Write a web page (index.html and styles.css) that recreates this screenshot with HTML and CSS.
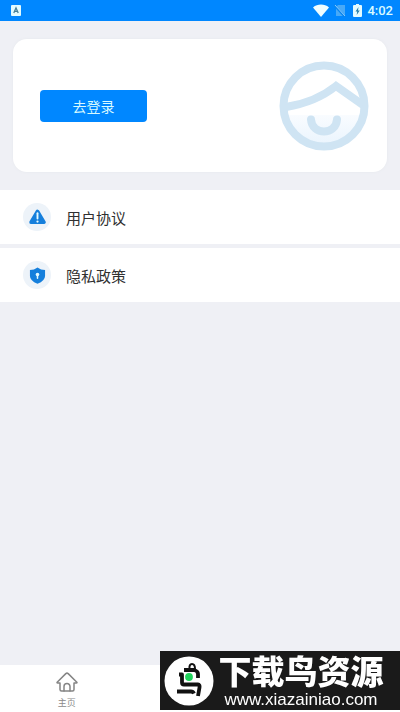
FILE: index.html
```html
<!DOCTYPE html>
<html lang="zh-CN">
<head>
<meta charset="utf-8">
<meta name="viewport" content="width=device-width, initial-scale=1">
<title>我的</title>
<link rel="stylesheet" href="styles.css">
</head>
<body>
<header class="status">
  <svg class="status-app" viewBox="0 0 10 11" aria-hidden="true"><rect width="10" height="11" rx="1" fill="#e2fbff"/><path d="M2.8 8 5 2.8 7.2 8M3.6 6.4h2.8" fill="none" stroke="#467f98" stroke-width="1.3"/></svg>
  <div class="status-right">
    <svg class="wifi" viewBox="0 0 16 13" aria-hidden="true"><path d="M0 3.4C4.600 -.4 11.400 -.4 16 3.400L8 13z" fill="#effdff"/></svg>
    <svg class="sim" viewBox="0 0 12 13" aria-hidden="true"><path d="M4 1h7v11H2V3z" fill="#48a9f7"/><path d="M0 1l11 12" stroke="#0785ef" stroke-width="2"/><path d="M1 1l10 11" stroke="#8acaff" stroke-width="1"/></svg>
    <svg class="battery" viewBox="0 0 9 13" aria-hidden="true"><path d="M3 0h3v1h2q1 0 1 1v10q0 1-1 1H1q-1 0-1-1V2q0-1 1-1h2z" fill="#e5fcff"/><path d="M5.500 3 2.500 7.500h1.700L3.700 11l3-4.500H5z" fill="#287faa"/></svg>
    <time>4:02</time>
  </div>
</header>
<main>
  <section class="profile">
    <button class="login" type="button">去登录</button>
    <svg class="avatar" viewBox="0 0 90 90" aria-hidden="true">
      <defs><linearGradient id="face" x1="0" y1="0" x2="0" y2="1"><stop offset="0" stop-color="#f9fcff"/><stop offset="1" stop-color="#eaf4fd"/></linearGradient></defs>
      <path d="M6 54h78a40 40 0 0 1-78 0z" fill="url(#face)"/>
      <g fill="none" stroke="#cfe4f3" stroke-width="8">
        <circle cx="45" cy="45" r="40.500"/>
        <path d="M7 46C26 43 42 37 57 25L84 44"/>
        <path d="M32 58.500c1 16 25 16 26 0" stroke-linecap="round"/>
      </g>
    </svg>
  </section>
  <nav class="menu" aria-label="协议">
    <a class="row" href="#agreement">
      <span class="row-icon"><svg viewBox="0 0 18 18" aria-hidden="true"><path d="M9 2.700 15.700 14H2.300z" fill="#157fdc" stroke="#157fdc" stroke-width="4" stroke-linejoin="round"/><path d="M9 4.500v5.600" stroke="#e5faff" stroke-width="2" stroke-linecap="round"/><circle cx="9" cy="13.300" r="1.200" fill="#e5faff"/></svg></span>
      <span>用户协议</span>
    </a>
    <a class="row" href="#privacy">
      <span class="row-icon"><svg viewBox="0 0 18 18" aria-hidden="true"><path d="M9 .500Q12.500 3.200 17 3.200V9.500Q17 14.500 9 17.700 1 14.500 1 9.500V3.200Q5.500 3.200 9 .500z" fill="#157fdc"/><circle cx="9" cy="8" r="1.900" fill="#e5faff"/><path d="M9 8v4" stroke="#e5faff" stroke-width="1.600" stroke-linecap="round"/></svg></span>
      <span>隐私政策</span>
    </a>
  </nav>
</main>
<footer class="tabs">
  <a class="tab" href="#home">
    <svg viewBox="0 0 22 20" aria-hidden="true"><g fill="none" stroke="#858585" stroke-width="1.500" stroke-linejoin="round" stroke-linecap="round"><path d="M4 11H1.700Q.5 11 1.400 10L9.800 1.600Q11 .6 12.200 1.600L20.600 10Q21.500 11 20.300 11H18V17.500Q18 19 16.500 19H5.500Q4 19 4 17.500z"/><path d="M8 19v-4.500a3 3 0 0 1 6 0V19"/></g></svg>
    <span>主页</span>
  </a>
</footer>
<aside class="brand">
  <svg class="brand-logo" viewBox="0 0 50 50" aria-hidden="true">
    <circle cx="25" cy="25" r="24.500" fill="#fff"/>
    <g fill="none" stroke="#111" stroke-width="3.800" stroke-linejoin="round">
      <path d="M25.500 13q-.5-5 2.500-5t3 5" stroke-width="2"/>
      <path d="M20 14h10q4 1 4 4v4"/>
      <path d="M15 18.500h3v8q0 2 2 2h14q2 0 1.500 3T34 40"/>
      <path d="M13 35.500h14q2 0 3 2"/>
    </g>
    <circle cx="25" cy="21" r="3.900" fill="#20d45c"/>
  </svg>
  <div class="brand-text">
    <strong>下载鸟资源</strong>
    <span>www.xiazainiao.com</span>
  </div>
</aside>
</body>
</html>
```
FILE: styles.css
```css
* { box-sizing: border-box; }
body {
  margin: 0;
  min-height: 100vh;
  display: flex;
  flex-direction: column;
  background: #eff0f5;
  color: #303030;
  font-family: Roboto, "Noto Sans CJK SC", sans-serif;
}
a { color: inherit; text-decoration: none; }
svg { display: block; flex: none; }
.status {
  height: 21px;
  padding: 0 7px 0 11px;
  display: flex;
  align-items: center;
  justify-content: space-between;
  background: #0087ff;
  color: #d9faff;
}
.status-app { width: 10px; height: 11px; }
.status-right { display: flex; align-items: center; }
.wifi { width: 16px; height: 13px; margin-right: 5px; }
.sim { width: 12px; height: 13px; margin-right: 7px; }
.battery { width: 9px; height: 13px; margin-right: 5px; }
.status time { font-size: 13px; line-height: 21px; font-weight: 500; }
main { flex: 1; }
.profile {
  margin: 18px 13px;
  padding: 22px 18px 21px 27px;
  display: flex;
  align-items: center;
  justify-content: space-between;
  background: #fff;
  border-radius: 14px;
  box-shadow: 0 0 3px #e6e8ed;
}
.login {
  width: 107px;
  height: 32px;
  padding: 0;
  border: 0;
  border-radius: 4px;
  background: #0087ff;
  color: #d9faff;
  font: inherit;
  font-size: 14px;
}
.avatar { width: 90px; height: 90px; }
.menu { display: grid; gap: 4px; }
.row {
  height: 54px;
  padding: 0 23px;
  display: flex;
  align-items: center;
  gap: 15px;
  background: #fff;
  font-size: 15px;
}
.row-icon {
  width: 28px;
  height: 28px;
  display: grid;
  place-items: center;
  border-radius: 50%;
  background: #edf3f9;
}
.row-icon svg { width: 17px; height: 17px; }
.tabs {
  height: 47px;
  display: grid;
  grid-template-columns: repeat(3, 1fr);
  background: #fff;
}
.tab {
  padding-top: 7px;
  display: flex;
  flex-direction: column;
  align-items: center;
  gap: 4px;
  color: #8a8a8a;
  font-size: 9px;
  line-height: 14px;
}
.tab svg { width: 22px; height: 20px; }
.brand {
  position: fixed;
  right: 0;
  bottom: 2px;
  width: 240px;
  height: 59px;
  padding: 0 12px 0 4px;
  display: flex;
  align-items: center;
  background: #1a1a1a;
  color: #fff;
}
.brand-logo { width: 50px; height: 50px; }
.brand-text {
  flex: 1;
  display: flex;
  flex-direction: column;
  align-items: center;
  gap: 3px;
}
.brand-text strong {
  font-family: "Noto Sans CJK SC", sans-serif;
  font-size: 33px;
  font-weight: 900;
  line-height: 36px;
  white-space: nowrap;
}
.brand-text span {
  font-family: "Liberation Sans", sans-serif;
  font-size: 17px;
  line-height: 18px;
}
```
